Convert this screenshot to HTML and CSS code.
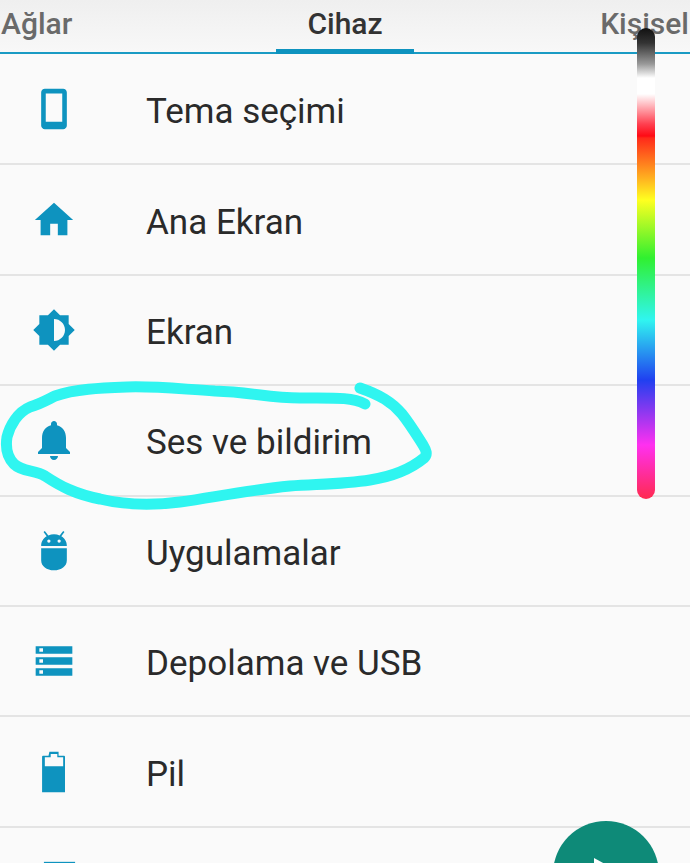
FILE: index.html
```html
<!DOCTYPE html>
<html lang="tr">
<head>
<meta charset="utf-8">
<title>Ayarlar</title>
<link rel="stylesheet" href="styles.css">
</head>
<body>
<div class="screen">
  <nav class="tabs">
    <span class="tab tab-left">Ağlar</span>
    <span class="tab tab-active">Cihaz</span>
    <span class="tab tab-right">Kişisel</span>
  </nav>
  <ul class="menu">
    <li class="row">
      <svg class="icon" viewBox="0 0 24 24"><path fill-rule="evenodd" d="M7 1h10c1.1 0 2 .9 2 2v18c0 1.1-.9 2-2 2H7c-1.100 0-2-.9-2-2V3c0-1.100.9-2 2-2zM7.500 3.500v15.500h9V3.500z"/></svg>
      <span class="label">Tema seçimi</span>
    </li>
    <li class="row">
      <svg class="icon" viewBox="0.5 0.5 23 23"><path d="M10 20v-6h4v6h5v-8h3L12 3 2 12h3v8z"/></svg>
      <span class="label">Ana Ekran</span>
    </li>
    <li class="row">
      <svg class="icon" viewBox="0 0 24 24"><path d="M20 15.310L23.310 12 20 8.690V4h-4.690L12 .69 8.690 4H4v4.690L.69 12 4 15.310V20h4.690L12 23.310 15.310 20H20v-4.690zM12 18V6c3.310 0 6 2.690 6 6s-2.690 6-6 6z"/></svg>
      <span class="label">Ekran</span>
    </li>
    <li class="row">
      <svg class="icon" viewBox="1 1 22 22"><path d="M12 22c1.100 0 2-.9 2-2h-4c0 1.100.89 2 2 2zm6-6v-5c0-3.070-1.640-5.640-4.500-6.320V4c0-.83-.67-1.500-1.500-1.500s-1.500.67-1.500 1.500v.68C7.630 5.360 6 7.920 6 11v5l-2 2v1h16v-1l-2-2z"/></svg>
      <span class="label">Ses ve bildirim</span>
    </li>
    <li class="row">
      <svg class="icon" viewBox="0 0 24 24"><path d="M5 10.500h14V17c0 3.300-3 5.500-7 5.500S5 20.300 5 17zM5 9.300C5 6.900 6.200 5 8 4L6.300 1.600l.7-.5L8.900 3.500c1-.4 2-.6 3.100-.6s2.100.2 3.100.6L17 1.100l.7.500L16 4c1.800 1 3 2.900 3 5.300zM9.200 5.700a.9.9 0 1 0 0 1.800.9.9 0 0 0 0-1.800zm5.600 0a.9.9 0 1 0 0 1.800.9.9 0 0 0 0-1.800z" fill-rule="evenodd"/></svg>
      <span class="label">Uygulamalar</span>
    </li>
    <li class="row">
      <svg class="icon" viewBox="0 0 24 24"><path d="M2 20h20v-4H2v4zm2-3h2v2H4v-2zM2 4v4h20V4H2zm4 3H4V5h2v2zm-4 7h20v-4H2v4zm2-3h2v2H4v-2z"/></svg>
      <span class="label">Depolama ve USB</span>
    </li>
    <li class="row">
      <svg class="icon" viewBox="0 0 24 24"><path fill-rule="evenodd" d="M9.500 1h5v2.200h3c.3 0 .5.2.5.5V23H5.500V3.700c0-.3.2-.5.5-.5h3zM10.200 3.900H7v5h10v-5h-3.200V2.200h-3.600z"/></svg>
      <span class="label">Pil</span>
    </li>
    <li class="row">
      <svg class="icon" viewBox="0 0 24 24"><rect x="6.500" y="1" width="17" height="22"/></svg>
    </li>
  </ul>

  <!-- hand-drawn marker loop around the notifications entry -->
  <svg class="marker" viewBox="0 0 690 863">
    <path d="M365 404C352 397 335 398 300 398C270 398 250 392 215 391C180 389 155 386 127 387C100 388 75 389 55 396C45 401 40 404 30 407C18 412 10 425 7 437C5 450 9 459 14 464C22 472 35 470 45 476C60 486 75 494 100 499C125 505 150 506 180 502C215 497 250 490 290 486C320 484 345 484 370 480C395 476 412 468 424 458C428 454 426 450 423 445C416 434 410 424 402 414C392 402 380 395 360 388"/>
  </svg>

  <!-- pen colour picker -->
  <div class="palette"></div>

  <button class="fab" type="button">
    <svg class="fab-arrow" viewBox="0 0 40 40"><path d="M6 4L39 22 6 41z"/></svg>
  </button>
</div>
</body>
</html>
```

FILE: styles.css
```css
* {
  box-sizing: border-box;
}

html,
body {
  margin: 0;
  height: 863px;
  overflow: hidden;
  background: #fafafa;
}

.screen {
  position: relative;
  width: 690px;
  height: 863px;
  overflow: hidden;
  font-family: Roboto, "Liberation Sans", sans-serif;
  color: #2a2a2a;
}

.tabs {
  display: grid;
  grid-template-columns: 276px 138px 1fr;
  height: 54px;
  border-bottom: 2px solid #1a9bc4;
  background: linear-gradient(#efefef, #f8f8f8);
}

.tab {
  font-size: 30px;
  font-weight: 500;
  line-height: 48px;
  color: #6a6a6a;
  white-space: nowrap;
}

.tab-left {
  padding-left: 1px;
}

.tab-active {
  height: 54px;
  border-bottom: 5px solid #0e93bf;
  text-align: center;
  color: #333;
}

.tab-right {
  justify-self: end;
  padding-right: 1px;
}

.menu {
  margin: 0;
  padding: 1px 0 0;
  list-style: none;
}

.row {
  display: flex;
  align-items: center;
  gap: 70px;
  height: 110.4px;
  padding-left: 32px;
  border-bottom: 2px solid #e4e4e4;
}

.icon {
  flex: none;
  width: 44px;
  height: 44px;
  fill: #0e93bf;
}

.label {
  padding-top: 6px;
  font-size: 35px;
  line-height: 40px;
  white-space: nowrap;
}

.marker {
  position: absolute;
  top: 0;
  left: 0;
  width: 690px;
  height: 863px;
  fill: none;
  stroke: #2ff5f0;
  stroke-width: 11;
  stroke-linecap: round;
  stroke-linejoin: round;
}

.palette {
  position: absolute;
  top: 28px;
  left: 637px;
  width: 18px;
  height: 471px;
  border-radius: 9px;
  background: linear-gradient(
    #111 0,
    #333 15px,
    #999 36px,
    #fff 50px,
    #fff 66px,
    #ff4050 96px,
    #ff0a14 108px,
    #ff2a1a 110px,
    #ffb020 150px,
    #ffff20 172px,
    #30f030 230px,
    #30f5f0 292px,
    #2040f0 352px,
    #ff30f0 417px,
    #ff2a50 471px
  );
}

.fab {
  position: absolute;
  top: 821px;
  left: 553px;
  width: 106px;
  height: 106px;
  padding: 0;
  border: 0;
  border-radius: 50%;
  background: #0e8a78;
}

.fab-arrow {
  position: absolute;
  top: 33px;
  left: 35px;
  width: 40px;
  height: 40px;
  overflow: visible;
  fill: #fff;
}
```
